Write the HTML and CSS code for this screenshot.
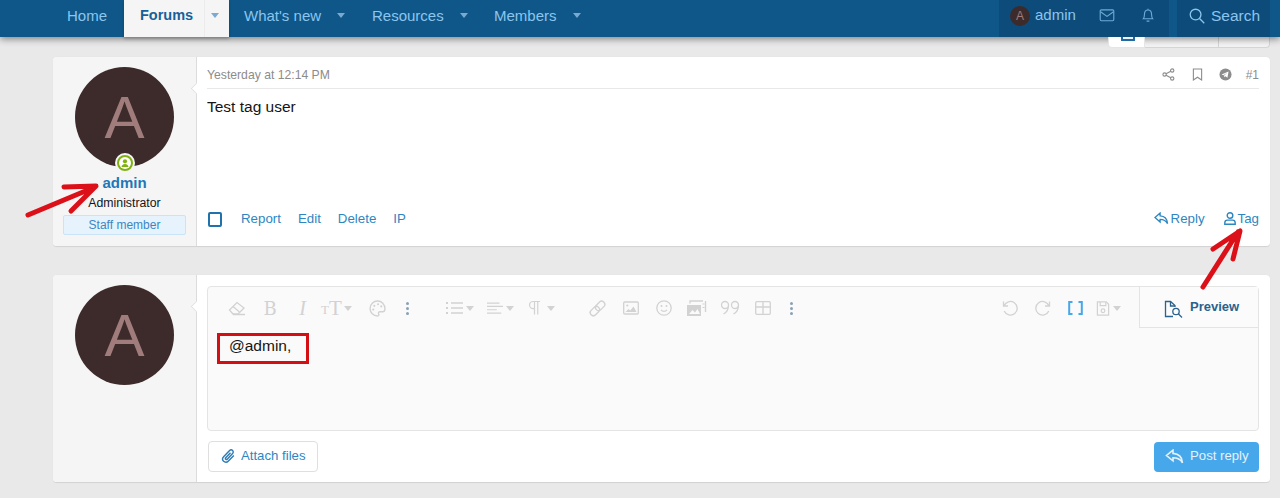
FILE: index.html
```html
<!DOCTYPE html>
<html lang="en">
<head>
<meta charset="utf-8">
<title>Test tag user</title>
<link rel="stylesheet" href="styles.css">
</head>
<body>
<header class="nav">
  <nav class="nav-main">
    <a class="tab tab-home">Home</a>
    <a class="tab tab-active"><span class="tab-label">Forums</span><span class="split"><i class="caret"></i></span></a>
    <a class="tab tab-whatsnew"><span>What's new</span><i class="caret"></i></a>
    <a class="tab tab-res"><span>Resources</span><i class="caret"></i></a>
    <a class="tab tab-mem"><span>Members</span><i class="caret"></i></a>
  </nav>
  <div class="nav-user">
    <span class="mini-avatar">A</span><span class="nav-name">admin</span>
    <svg class="nav-icon ni-mail" viewBox="0 0 16 14" width="16" height="13"><rect x=".7" y="1" width="14.6" height="11.6" rx="1.2"/><path d="M1 3l7 5 7-5"/></svg>
    <svg class="nav-icon ni-bell" viewBox="0 0 14 16" width="14" height="15"><path d="M2 11.5c1-1.2 1.2-2.4 1.2-4.6C3.200 4 5 2.200 7 2.200s3.800 1.800 3.800 4.700c0 2.200.2 3.400 1.200 4.600zM7 .8v1.400M5.500 14h3"/></svg>
  </div>
  <div class="nav-search">
    <svg class="nav-icon" viewBox="0 0 17 17" width="16" height="16"><circle cx="7" cy="7" r="5.700"/><path d="M11.200 11.200l5 5"/></svg>
    <span>Search</span>
  </div>
</header>

<main class="page">
  <div class="top-buttons">
    <span class="tb-seg tb-seg-first"><i class="tb-peek"></i></span>
    <span class="tb-seg tb-seg-mid"></span>
    <span class="tb-seg tb-seg-last"></span>
  </div>

  <article class="post post-first">
    <aside class="post-user">
      <div class="avatar-wrap">
        <div class="avatar">A</div>
        <span class="status"><svg viewBox="0 0 12 12" width="12" height="12"><circle cx="6" cy="6" r="6" fill="#fff"/><circle cx="6" cy="4.300" r="2.100" fill="#7fb20f"/><path d="M2.500 10c.3-2.200 1.700-3.100 3.500-3.100s3.200.9 3.500 3.100z" fill="#7fb20f"/></svg></span>
      </div>
      <a class="user-name">admin</a>
      <div class="user-title">Administrator</div>
      <div class="user-badge">Staff member</div>
    </aside>
    <div class="post-main">
      <div class="post-head">
        <time>Yesterday at 12:14 PM</time>
        <div class="post-tools">
          <svg class="tool" viewBox="0 0 14 14" width="13" height="13"><circle cx="11" cy="2.700" r="1.800"/><circle cx="2.800" cy="7" r="1.800"/><circle cx="11" cy="11.300" r="1.800"/><path d="M4.400 6.200l5-2.700M4.400 7.800l5 2.700"/></svg>
          <svg class="tool" viewBox="0 0 12 14" width="11" height="13"><path d="M1.500 1h9v12L6 10l-4.500 3z"/></svg>
          <svg class="tool-solid" viewBox="0 0 14 14" width="13" height="13"><circle cx="7" cy="7" r="6.500" fill="#8c8c8c"/><path d="M2.800 6.900l7.500-3-1.200 6.500-2.200-1.600-1.200 1.100-.2-1.900 3.400-2.800-4.200 2.500z" fill="#fff"/></svg>
          <span class="post-num">#1</span>
        </div>
      </div>
      <div class="post-body">Test tag user</div>
      <div class="post-actions">
        <span class="check"></span>
        <a class="act">Report</a><a class="act">Edit</a><a class="act">Delete</a><a class="act">IP</a>
        <a class="act act-reply"><svg class="act-icon" viewBox="0 0 16 14" width="15" height="13"><path d="M6.500 1.200L1 6l5.500 4.800V8c3.500 0 6 .7 8 4.500C14.200 7.500 11 4.500 6.500 4.200z"/></svg>Reply</a>
        <a class="act act-tag"><svg class="act-icon" viewBox="0 0 12 13" width="12" height="13"><circle cx="6" cy="3.500" r="2.800"/><path d="M.8 12.300v-1.500c0-1.600 1.200-2.700 2.700-2.700h5c1.500 0 2.700 1.100 2.700 2.700v1.500z"/></svg>Tag</a>
      </div>
    </div>
  </article>

  <article class="post post-reply">
    <aside class="post-user">
      <div class="avatar">A</div>
    </aside>
    <div class="post-main reply-main">
      <div class="editor">
        <div class="editor-top">
          <div class="toolbar">
            <span class="tbi"><svg viewBox="0 0 18 16" width="18" height="16"><path d="M1.500 10L9 2.500 16 8l-6 6H5z"/><path d="M5 6.500L11.500 12M5 14.500h12"/></svg></span>
            <span class="tbi tbi-text tbi-b">B</span>
            <span class="tbi tbi-text tbi-i">I</span>
            <span class="tbi tbi-drop tbi-tt"><span class="tt-small">T</span><span class="tt-big">T</span><i class="caret caret-tb"></i></span>
            <span class="tbi"><svg viewBox="0 0 16 16" width="17" height="17"><path d="M8 1a7 7 0 1 0 0 14c1.300 0 1.600-1 1.100-1.800-.6-1 0-2.200 1.300-2.200H13c1.300 0 2-.9 2-2.500C15 4 12 1 8 1z"/><circle class="filled" cx="5" cy="5.500" r="1"/><circle class="filled" cx="8.500" cy="4" r="1"/><circle class="filled" cx="11.500" cy="6" r="1"/><circle class="filled" cx="4" cy="9" r="1"/></svg></span>
            <span class="tbi tbi-dots"><i></i><i></i><i></i></span>
            <span class="tbi tbi-drop tbi-list"><svg viewBox="0 0 18 14" width="18" height="14"><path d="M6 2h12M6 7h12M6 12h12"/><path class="thick" d="M1 2h2M1 7h2M1 12h2"/></svg><i class="caret caret-tb"></i></span>
            <span class="tbi tbi-drop"><svg viewBox="0 0 18 14" width="16" height="14"><path d="M0 1.500h14M0 5.200h18M0 9h11M0 12.700h16"/></svg><i class="caret caret-tb"></i></span>
            <span class="tbi tbi-drop tbi-para"><svg viewBox="0 0 14 16" width="13" height="16"><path d="M13 1H5.500a3.800 3.800 0 0 0 0 7.600H7M7 1v14M10.500 1v14"/></svg><i class="caret caret-tb"></i></span>
            <span class="tbi tbi-link"><svg viewBox="0 0 18 18" width="19" height="19"><g transform="rotate(-45 9 9)"><rect x=".5" y="6" width="10" height="6" rx="3"/><rect x="7.500" y="6" width="10" height="6" rx="3"/></g></svg></span>
            <span class="tbi"><svg viewBox="0 0 16 14" width="16" height="14"><rect x=".7" y="1" width="14.600" height="12" rx="1"/><circle class="filled" cx="4.300" cy="4.500" r="1.100"/><path class="filled" d="M2.500 11l3-3 1.800 1.500 3.200-4 3 5.500z"/></svg></span>
            <span class="tbi"><svg viewBox="0 0 16 16" width="16" height="16"><circle cx="8" cy="8" r="7.200"/><path d="M5 9.800c1.500 2 4.500 2 6 0"/><circle class="filled" cx="5.500" cy="6" r="1"/><circle class="filled" cx="10.500" cy="6" r="1"/></svg></span>
            <span class="tbi"><svg viewBox="0 0 21 16" width="21" height="16"><path class="filled" d="M1 5h14v11H1z"/><path d="M4 3.500V1h13M19.500 1v11"/><path class="cut" d="M3 14l3.500-4 2.500 2.500 2.500-3.500 2.500 5z"/><path class="thick" d="M17.500 3.500v1M17.500 7v1"/></svg></span>
            <span class="tbi"><svg viewBox="0 0 20 16" width="20" height="16"><path d="M5 1.500a3.500 3.500 0 0 1 3.500 3.500c0 4-2 7.500-5 9M8.500 5a3.500 3.500 0 1 1-3.500-3.500M15 1.500a3.500 3.500 0 0 1 3.500 3.500c0 4-2 7.500-5 9M18.500 5a3.500 3.500 0 1 1-3.500-3.500"/></svg></span>
            <span class="tbi"><svg viewBox="0 0 16 14" width="16" height="14"><rect x=".7" y=".7" width="14.600" height="12.600" rx="1"/><path d="M8 .7v12.600M.7 6h14.600"/></svg></span>
            <span class="tbi tbi-dots tbi-dots2"><i></i><i></i><i></i></span>
            <span class="tbi tbi-undo"><svg viewBox="0 0 16 16" width="16" height="16"><path d="M1.500 1.500v4.500H6M2 6a6.800 6.800 0 1 1 .2 5"/></svg></span>
            <span class="tbi"><svg viewBox="0 0 16 16" width="16" height="16"><path d="M14.500 1.500v4.500H10M14 6a6.800 6.800 0 1 0-.2 5"/></svg></span>
            <span class="tbi tbi-brackets"><svg viewBox="0 0 15 14" width="15" height="14"><path d="M4.500 1H1.200v12h3.300M10.500 1h3.300v12h-3.300"/></svg></span>
            <span class="tbi tbi-drop tbi-save"><svg viewBox="0 0 14 16" width="14" height="15"><path d="M1 1h9.500L13 3.500V15H1z"/><path d="M4 1v4h6V1"/><circle cx="7" cy="10.500" r="2"/></svg><i class="caret caret-tb"></i></span>
          </div>
          <div class="preview">
            <svg viewBox="0 0 19 18" width="19" height="18"><path d="M9 16.500H1.500v-15h5L11 5.500v1.500"/><path d="M6.500 1.500v4.500H11"/><circle cx="12" cy="11.500" r="3.200"/><path d="M14.500 14l3.500 3.500"/></svg>
            <span>Preview</span>
          </div>
        </div>
        <div class="editor-text"><span class="mention-box">@admin,</span></div>
      </div>
      <div class="form-row">
        <a class="btn-attach"><svg viewBox="0 0 14 16" width="14" height="16"><path d="M12.800 7.500l-5.600 5.800a3.200 3.200 0 0 1-4.600-4.500l6-6.200a2.100 2.100 0 0 1 3 3L6.200 11.200a1 1 0 0 1-1.500-1.400l4.800-5"/></svg>Attach files</a>
        <a class="btn-post"><svg viewBox="0 0 18 15" width="19" height="15"><path d="M7.500 1.200L1 6.500l6.500 5.300V8.800c4 0 7 .6 9.500 5-.3-5.500-4-9-9.500-9.400z"/></svg>Post reply</a>
      </div>
    </div>
  </article>
</main>

<svg class="annotations" viewBox="0 0 1280 498" width="1280" height="498" aria-hidden="true">
  <path d="M28 215L95 187M64 187L96 186L71 211"/>
  <path d="M1203 287L1238 232M1213 249L1240 231L1233 259"/>
</svg>
</body>
</html>
```
FILE: styles.css
```css
* { box-sizing: border-box; }
html, body { margin: 0; height: 498px; overflow: hidden; }
body {
  position: relative;
  background: #e9e9e9;
  font-family: "Liberation Sans", Arial, sans-serif;
  font-size: 14px;
  color: #141414;
}
a { color: inherit; text-decoration: none; }
i { font-style: normal; }

.nav {
  display: flex;
  height: 37px;
  padding: 0 10px 0 53px;
  background: #0e5788;
  color: #8cc5ee;
  font-size: 15px;
  box-shadow: 0 2px 7px rgba(0, 0, 0, .45);
  position: relative;
}
.nav-main { display: flex; flex: 1; }
.tab { display: flex; align-items: center; height: 37px; padding-bottom: 7px; }
.tab-home { width: 71px; padding-left: 14px; }
.tab-active {
  width: 105px;
  padding-left: 16px;
  padding-bottom: 0;
  background: #f5f5f5;
  color: #17609a;
  font-weight: 700;
  box-shadow: 0 2px 3px rgba(0,0,0,.2);
}
.tab-label { width: 64px; font-size: 14.500px; padding-bottom: 7px; }
.split { flex: 1; height: 100%; display: flex; align-items: center; padding: 0 0 7px 6px; border-left: 1px solid #ececec; }
.tab-whatsnew { padding-left: 15px; width: 143px; }
.tab-res { width: 122px; }
.tab-mem { width: 100px; }
.tab .caret { margin-left: 16px; }
.split .caret { margin-left: 0; }
.caret {
  display: inline-block;
  width: 0; height: 0;
  border-left: 4px solid transparent;
  border-right: 4px solid transparent;
  border-top: 5px solid #7ba9cf;
}
.nav-user {
  display: flex;
  align-items: center;
  width: 170px;
  padding: 0 0 6px 11px;
  background: #0d4c7a;
  position: relative;
}
.mini-avatar {
  width: 20px; height: 20px;
  border-radius: 50%;
  background: #3d2b2b;
  color: #a07c7c;
  font-size: 12px;
  display: flex; align-items: center; justify-content: center;
  margin-right: 5px;
}
.nav-name { margin-top: -2px; }
.nav-icon { fill: none; stroke: #6fa9d6; stroke-width: 1.200; }
.ni-mail { margin-left: 23px; }
.ni-bell { margin-left: 26px; }
.nav-search {
  display: flex;
  align-items: center;
  gap: 6px;
  width: 93px;
  margin-left: 8px;
  padding: 0 0 6px 12px;
  background: #0d4c7a;
  font-size: 15.500px;
}
.nav-search .nav-icon { stroke: #8cc5ee; stroke-width: 1.400; }

.page { padding: 0 10px 0 53px; }
.top-buttons { display: flex; justify-content: flex-end; height: 11px; }
.tb-seg {
  height: 11px;
  background: #f4f4f4;
  border: 1px solid #d5d5d5;
  border-top: 0;
}
.tb-seg-first { width: 37px; background: #fff; border-color: #e5e5e5; border-radius: 0 0 0 4px; position: relative; }
.tb-seg-mid { width: 74px; border-left: 0; }
.tb-seg-last { width: 51px; border-left: 0; border-radius: 0 0 4px 0; }
.tb-peek {
  position: absolute;
  left: 12px; top: 0;
  width: 14px; height: 4px;
  border: 2px solid #1d6aa5;
  border-top: 0;
  background: #eaf1f7;
  border-radius: 0 0 1px 1px;
}

.post {
  display: grid;
  grid-template-columns: 144px 1fr;
  background: #fff;
  border-radius: 4px;
  border-bottom: 1px solid #d4d4d4;
  box-shadow: 0 0 1px rgba(0,0,0,.08);
}
.post-first { margin-top: 9px; height: 190px; }
.post-reply { margin-top: 28px; height: 208px; }
.post-user {
  background: #f5f5f5;
  border-right: 1px solid #dcdcdc;
  border-radius: 4px 0 0 4px;
  padding: 10px 10px 0;
  display: flex;
  flex-direction: column;
  align-items: center;
  position: relative;
}
.post-user::after {
  content: "";
  position: absolute;
  right: -6px; top: 26px;
  width: 10px; height: 10px;
  background: #fff;
  border-left: 1px solid #dcdcdc;
  border-top: 1px solid #dcdcdc;
  transform: rotate(-45deg) scale(.72);
  transform-origin: center;
}
.avatar-wrap { position: relative; height: 100px; }
.avatar {
  width: 99px; height: 100px;
  border-radius: 50%;
  background: #3d2b2b;
  color: #a07c7c;
  font-size: 60px;
  display: flex; align-items: center; justify-content: center;
}
.status {
  position: absolute;
  left: 40px; bottom: -6px;
  width: 20px; height: 20px;
  border-radius: 50%;
  background: #7fb20f;
  border: 2px solid #f5f5f5;
  display: flex; align-items: center; justify-content: center;
}
.user-name { margin-top: 7px; color: #1e78b8; font-size: 15px; font-weight: 700; line-height: 18px; }
.user-title { margin-top: 2px; font-size: 12.300px; line-height: 18px; color: #141414; }
.user-badge {
  margin-top: 3px;
  width: 123px; height: 20px;
  background: #e6f3fd;
  border: 1px solid #c9e3f7;
  border-radius: 2px;
  color: #3b87c4;
  font-size: 12px;
  line-height: 18px;
  text-align: center;
}

.post-main { padding: 10px 11px 0 10px; display: flex; flex-direction: column; min-width: 0; }
.post-head {
  display: flex;
  justify-content: space-between;
  align-items: center;
  height: 22px;
  padding-bottom: 6px;
  border-bottom: 1px solid #e8e8e8;
  color: #8c8c8c;
  font-size: 12.200px;
}
.post-tools { display: flex; align-items: center; }
.tool { fill: none; stroke: #8c8c8c; stroke-width: 1.200; margin-left: 17px; }
.tool-solid { margin-left: 16px; }
.post-num { margin-left: 14px; color: #8c8c8c; font-size: 12px; }
.post-body { margin-top: 9px; font-size: 15.500px; line-height: 17px; flex: 1; }
.post-actions {
  display: flex;
  align-items: center;
  height: 20px;
  margin-bottom: 18px;
  color: #2e86c1;
  font-size: 13.300px;
  padding-left: 1px;
}
.check {
  width: 14px; height: 15px;
  border: 2px solid #2072ad;
  border-radius: 2px;
  margin-right: 19px;
  margin-top: 3px;
}
.act { margin-right: 17px; white-space: nowrap; }
.act-icon { fill: none; stroke: #2e86c1; stroke-width: 1.400; margin-right: 2px; vertical-align: -2px; }
.act-reply { margin-left: auto; margin-right: 19px; }
.act-tag { margin-right: 0; }

.reply-main { padding-top: 11px; }
.editor {
  height: 145px;
  background: #fafafa;
  border: 1px solid #e4e4e4;
  border-radius: 4px;
}
.editor-top { display: flex; height: 41px; }
.toolbar {
  flex: 1;
  display: flex;
  align-items: center;
  padding-left: 12px;
  padding-top: 1px;
  height: 41px;
}
.tbi {
  flex: none;
  width: 33px;
  height: 24px;
  display: flex;
  align-items: center;
  justify-content: center;
}
.tbi svg { fill: none; stroke: #d2d2d2; stroke-width: 1.300; }
.tbi svg .filled { fill: #d2d2d2; stroke: none; }
.tbi svg .cut { fill: #fafafa; stroke: none; }
.tbi svg .thick { stroke-width: 2; }
.tbi-text { font-family: "Liberation Serif", serif; font-size: 20px; color: #d2d2d2; }
.tbi-b { font-family: "DejaVu Serif", serif; font-size: 18px; padding-left: 1px; }
.tbi-i { font-style: italic; }
.tbi-drop { width: 41px; gap: 3px; }
.tbi-tt { width: 42px; justify-content: flex-start; padding-left: 2px; font-family: "Liberation Serif", serif; color: #d2d2d2; gap: 0; }
.tt-small { font-size: 13px; margin-top: 4px; }
.tt-big { font-size: 21px; }
.caret-tb { border-top-color: #d2d2d2; border-left-width: 4.500px; border-right-width: 4.500px; }
.tt-big + .caret-tb { margin-left: 2px; }
.tbi-dots { width: 26px; flex-direction: column; gap: 2px; }
.tbi-dots i { width: 3px; height: 3px; border-radius: 50%; background: #8aa2b5; }
.tbi-dots + .tbi-list { margin-left: 19px; }
.tbi-para { justify-content: flex-start; padding-left: 7px; gap: 6px; }
.tbi-link { margin-left: 19px; }
.tbi-dots2 { margin-left: -1px; }
.tbi-undo { margin-left: auto; }
.tbi-brackets svg { stroke: #47a7eb; stroke-width: 2; }
.tbi-save { width: 33px; margin-right: 14px; }
.preview {
  flex: none;
  width: 119px;
  height: 41px;
  background: #fbfbfb;
  border-left: 1px solid #e4e4e4;
  border-bottom: 1px solid #e4e4e4;
  display: flex;
  align-items: center;
  gap: 7px;
  padding-left: 24px;
  color: #2b628e;
  font-size: 13px;
  font-weight: 700;
}
.preview svg { fill: none; stroke: #2b628e; stroke-width: 1.300; margin-top: 3px; }
.preview span { margin-top: -2px; }
.editor-text { padding: 5px 9px; }
.mention-box {
  display: block;
  width: 92px; height: 31px;
  border: 3px solid #d40f14;
  padding-left: 9px;
  font-size: 15.500px;
  line-height: 20px;
  color: #141414;
}
.form-row { display: flex; justify-content: space-between; margin-top: 10px; padding: 0 0 0 1px; }
.btn-attach {
  display: flex;
  align-items: center;
  gap: 6px;
  width: 110px; height: 31px;
  padding: 0 0 2px 12px;
  background: #fff;
  border: 1px solid #dfdfdf;
  border-radius: 4px;
  color: #2e86c1;
  font-size: 13.200px;
}
.btn-attach svg { fill: none; stroke: #2e7ab5; stroke-width: 1.400; }
.btn-post {
  display: flex;
  align-items: center;
  gap: 6px;
  width: 105px; height: 30px;
  margin-top: 1px;
  padding: 0 0 3px 11px;
  background: #47a7eb;
  border-radius: 4px;
  color: #e4f2fc;
  font-size: 13.200px;
}
.btn-post svg { fill: none; stroke: #e4f2fc; stroke-width: 1.600; margin-top: 2px; }

.annotations {
  position: absolute;
  left: 0; top: 0;
  pointer-events: none;
  fill: none;
  stroke: #dc1018;
  stroke-width: 5;
  stroke-linecap: round;
  stroke-linejoin: round;
}
```
